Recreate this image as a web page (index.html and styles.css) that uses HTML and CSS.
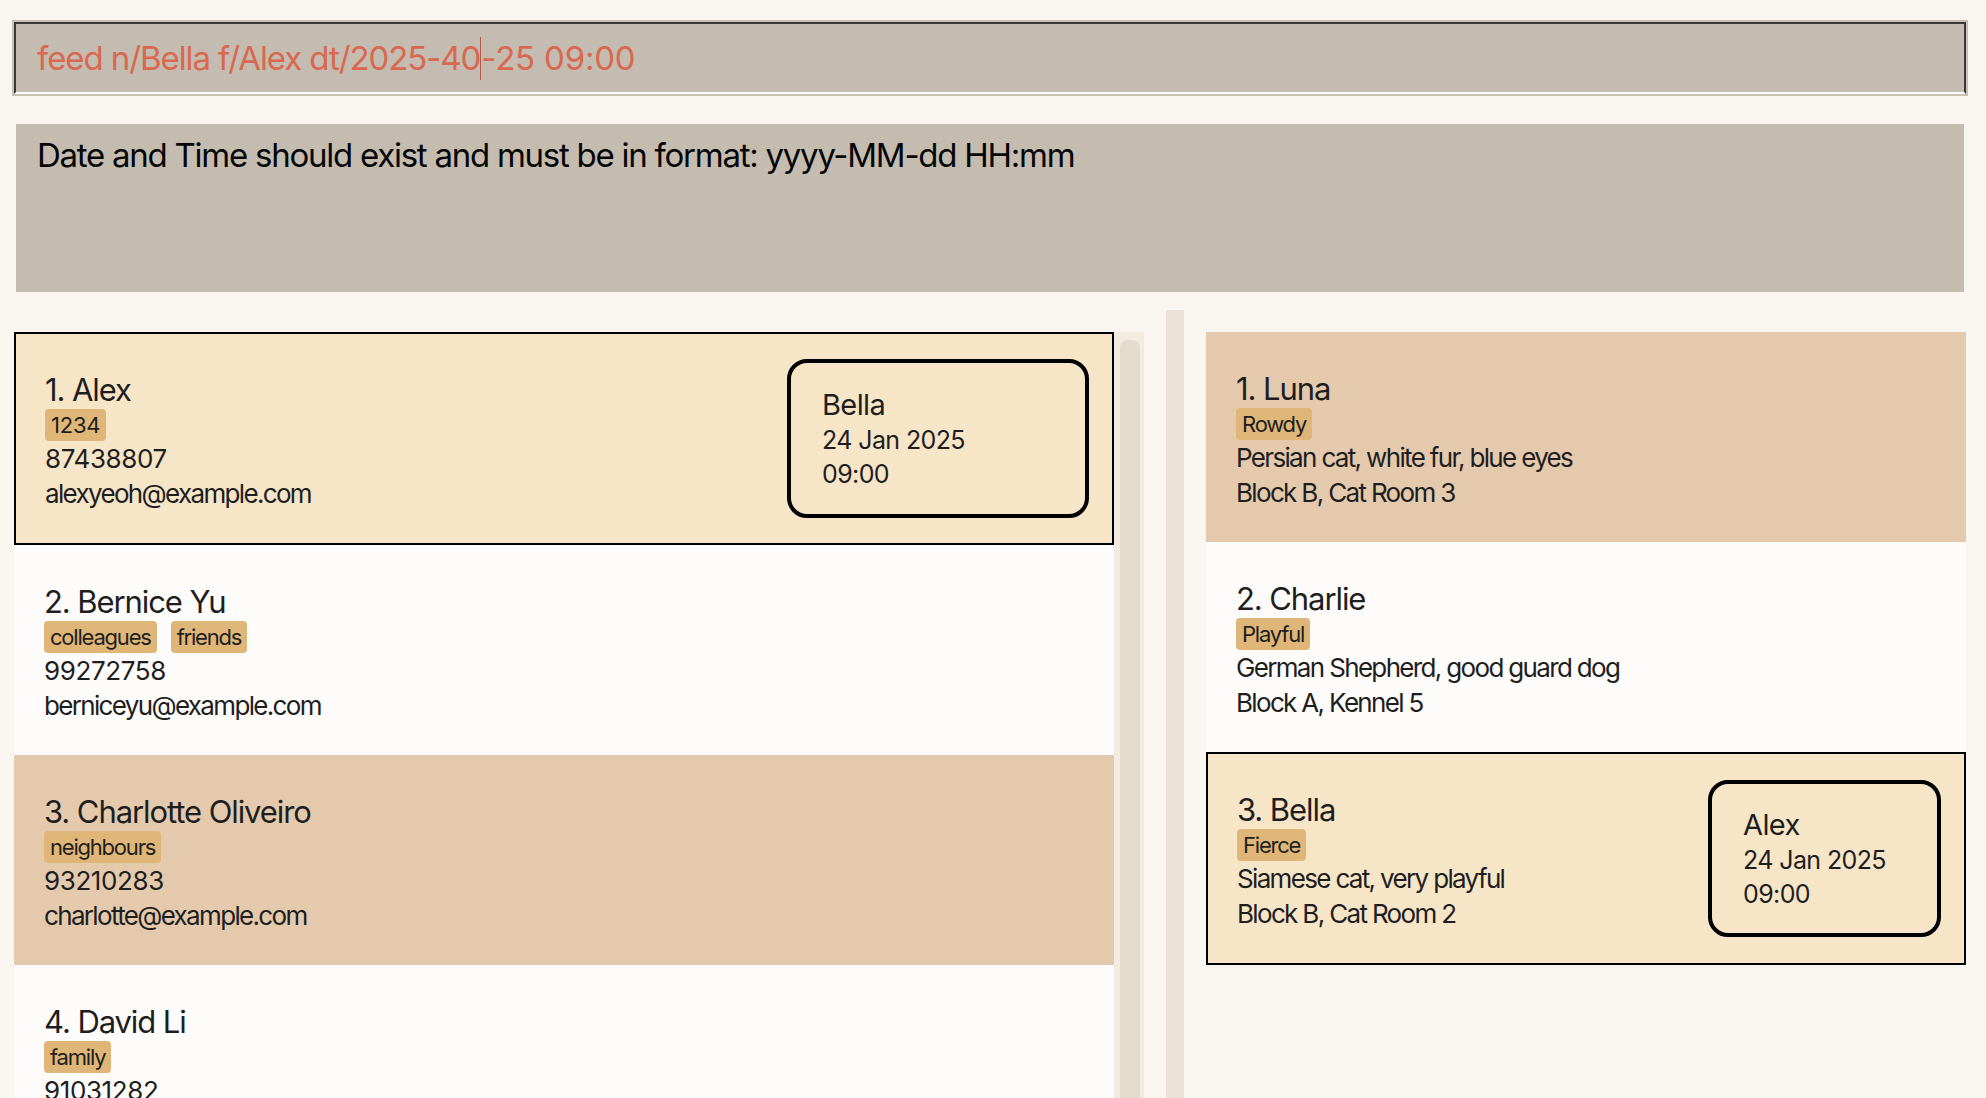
FILE: index.html
```html
<!DOCTYPE html>
<html lang="en">
<head>
<meta charset="utf-8">
<title>PawPal</title>
<link rel="stylesheet" href="styles.css">
</head>
<body>
<div class="app">
  <div class="command-pane">
    <div class="command-ring">
      <div class="command-field"><span class="cmd-head">feed n/Bella f/Alex dt/2025-40</span><span class="caret"></span><span class="cmd-tail">-25 09:00</span></div>
    </div>
  </div>
  <div class="result-pane">
    <div class="result-box">Date and Time should exist and must be in format: yyyy-MM-dd HH:mm</div>
  </div>
  <div class="panes">
    <section class="pane pane-persons">
      <div class="list">
        <div class="card selected">
          <div class="card-body">
            <div class="name">1. Alex</div>
            <div class="tags"><span class="tag tag-num">1234</span></div>
            <div class="detail phone">87438807</div>
            <div class="detail">alexyeoh@example.com</div>
          </div>
          <div class="feeding feeding-wide">
            <div class="feeding-name">Bella</div>
            <div class="feeding-line">24 Jan 2025</div>
            <div class="feeding-line">09:00</div>
          </div>
        </div>
        <div class="card">
          <div class="card-body">
            <div class="name">2. Bernice Yu</div>
            <div class="tags"><span class="tag">colleagues</span><span class="tag">friends</span></div>
            <div class="detail phone">99272758</div>
            <div class="detail">berniceyu@example.com</div>
          </div>
        </div>
        <div class="card alt">
          <div class="card-body">
            <div class="name">3. Charlotte Oliveiro</div>
            <div class="tags"><span class="tag">neighbours</span></div>
            <div class="detail phone">93210283</div>
            <div class="detail">charlotte@example.com</div>
          </div>
        </div>
        <div class="card">
          <div class="card-body">
            <div class="name">4. David Li</div>
            <div class="tags"><span class="tag">family</span></div>
            <div class="detail phone">91031282</div>
            <div class="detail">lidavid@example.com</div>
          </div>
        </div>
      </div>
      <div class="scrollbar"><div class="thumb"></div></div>
    </section>
    <div class="divider"></div>
    <section class="pane pane-pets">
      <div class="list">
        <div class="card alt">
          <div class="card-body">
            <div class="name">1. Luna</div>
            <div class="tags"><span class="tag">Rowdy</span></div>
            <div class="detail">Persian cat, white fur, blue eyes</div>
            <div class="detail">Block B, Cat Room 3</div>
          </div>
        </div>
        <div class="card">
          <div class="card-body">
            <div class="name">2. Charlie</div>
            <div class="tags"><span class="tag">Playful</span></div>
            <div class="detail">German Shepherd, good guard dog</div>
            <div class="detail">Block A, Kennel 5</div>
          </div>
        </div>
        <div class="card selected">
          <div class="card-body">
            <div class="name">3. Bella</div>
            <div class="tags"><span class="tag">Fierce</span></div>
            <div class="detail">Siamese cat, very playful</div>
            <div class="detail">Block B, Cat Room 2</div>
          </div>
          <div class="feeding feeding-narrow">
            <div class="feeding-name">Alex</div>
            <div class="feeding-line">24 Jan 2025</div>
            <div class="feeding-line">09:00</div>
          </div>
        </div>
      </div>
    </section>
  </div>
</div>
</body>
</html>
```
FILE: styles.css
```css
html, body {
  margin: 0;
  padding: 0;
}

body {
  width: 1986px;
  height: 1098px;
  overflow: hidden;
  background: #f9f6f1;
  font-family: Inter, "Noto Sans", "Liberation Sans", sans-serif;
  color: #1e1e1e;
}

.app {
  width: 1986px;
  height: 1098px;
  display: flex;
  flex-direction: column;
}

/* command box */
.command-pane {
  padding: 20px 18px 0 12px;
}

.command-ring {
  height: 76px;
  box-sizing: border-box;
  padding: 2px;
  background: #c8c0b4;
}

.command-field {
  height: 100%;
  box-sizing: border-box;
  border: 2px solid #3b3935;
  border-bottom-color: #ffffff;
  background: #c4bcb0;
  display: flex;
  align-items: center;
  padding-left: 21px;
  font-size: 33px;
  line-height: 40px;
  color: #d8684f;
  white-space: pre;
}

.cmd-head {
  letter-spacing: -0.033em;
}

.cmd-tail {
  letter-spacing: -0.006em;
}

.caret {
  display: inline-block;
  width: 1px;
  height: 43px;
  background: #b85a45;
}

/* result display */
.result-pane {
  padding: 28px 22px 0 16px;
}

.result-box {
  height: 168px;
  box-sizing: border-box;
  background: #c4bcaf;
  padding: 11px 21px;
  font-size: 33px;
  line-height: 40px;
  color: #050505;
  letter-spacing: -0.038em;
}

/* list panes */
.panes {
  flex: 1;
  min-height: 0;
  display: flex;
  padding: 15px 20px 0 14px;
  overflow: hidden;
}

.pane {
  padding-top: 25px;
  min-height: 0;
}

.pane-persons {
  width: 1130px;
  display: flex;
}

.pane-pets {
  width: 760px;
}

.list {
  flex: 1;
  min-width: 0;
  overflow: hidden;
}

.scrollbar {
  width: 30px;
  background: #f3ebdf;
  padding: 8px 4px 0 6px;
  box-sizing: border-box;
}

.thumb {
  height: 900px;
  background: #e3dbcb;
  border-radius: 8px;
}

.divider {
  width: 18px;
  margin: 3px 22px 0;
  background: #ede2d8;
}

/* cards */
.card {
  height: 210px;
  box-sizing: border-box;
  display: flex;
  align-items: center;
  padding: 0 25px 0 30px;
  background: #fefcfa;
}

.card.alt {
  background: #e4c9ad;
}

.card.selected {
  height: 213px;
  border: 2px solid #000;
  background: #f7e5c8;
  padding-left: 29px;
  padding-right: 23px;
}

.card-body {
  flex: 1;
  min-width: 0;
  padding-top: 5px;
}

.name {
  font-size: 31px;
  line-height: 38px;
  letter-spacing: -0.035em;
}

.tags {
  display: flex;
  gap: 14px;
  height: 32px;
}

.tag {
  font-size: 22px;
  line-height: 32px;
  padding: 0 6px;
  background: #dfb677;
  border-radius: 4px;
  letter-spacing: -0.055em;
}

.tag.tag-num {
  letter-spacing: -0.01em;
}

.detail {
  font-size: 26px;
  line-height: 35px;
  letter-spacing: -0.064em;
}

.detail.phone {
  letter-spacing: -0.015em;
}

.feeding {
  box-sizing: border-box;
  border: 4px solid #000;
  border-radius: 20px;
  display: flex;
  flex-direction: column;
  justify-content: center;
  padding-left: 31px;
  flex-shrink: 0;
  letter-spacing: -0.038em;
}

.feeding-wide {
  width: 302px;
  height: 159px;
}

.feeding-narrow {
  width: 233px;
  height: 157px;
}

.feeding-name {
  font-size: 29px;
  line-height: 37px;
}

.feeding-line {
  font-size: 25px;
  line-height: 34px;
}
```
